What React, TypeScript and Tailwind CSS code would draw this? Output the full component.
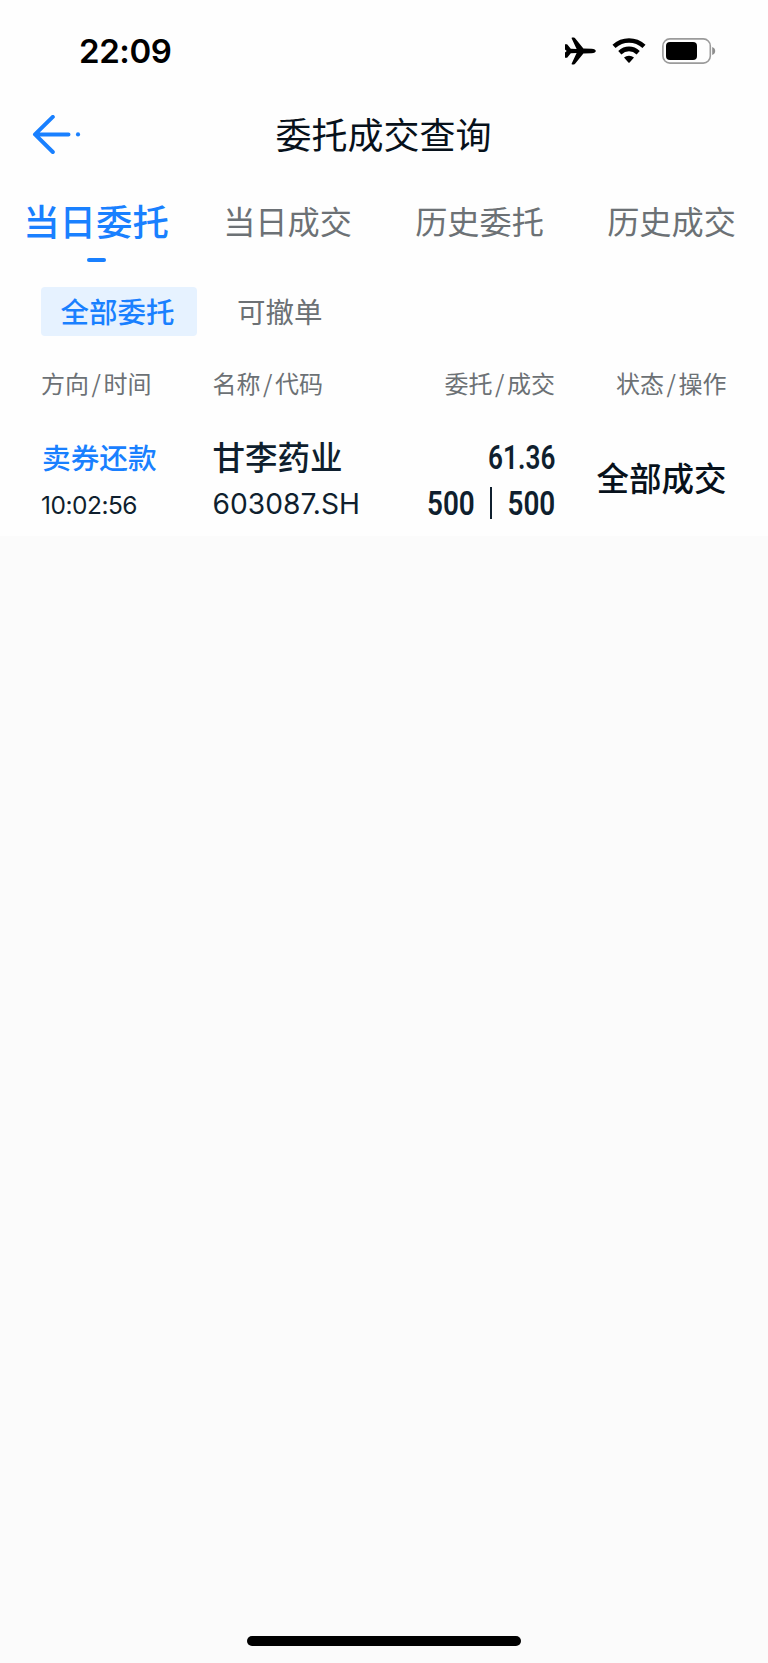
const cjk = "font-['Noto_Sans_CJK_SC',sans-serif]";

const tabs = ['当日委托', '当日成交', '历史委托', '历史成交'];

function StatusBar() {
  return (
    <div className="flex h-[102px] items-center justify-between pl-[79px] pr-[52px]">
      <span className="font-[Inter,sans-serif] text-[33px] font-semibold leading-none tracking-[-0.4px] text-black">22:09</span>
      <div className="flex items-center">
        <svg width="31" height="28" viewBox="0 0 31 28" fill="#000">
          <path d="M0 7.3H2.1L5.8 11.7L11.6 12L6.6 1.2Q6.5 0.5 7.2 0.5H8.8Q9.6 0.5 10.1 1.2L18.4 11.5L26.6 11.7Q30.8 12.2 30.8 14Q30.8 15.8 26.6 16.3L18.4 16.5L10.1 26.8Q9.6 27.5 8.8 27.5H7.2Q6.5 27.5 6.6 26.8L11.6 16L5.8 16.3L2.1 20.7H0V15.4L1.7 14L0 12.6Z" />
        </svg>
        <svg className="ml-[16px]" width="34" height="26" viewBox="0 0 34 26" fill="none" stroke="#000">
          <path d="M2 8.4Q8.6 2.5 17 2.5T32 8.4" strokeWidth="4.6" />
          <path d="M7.8 14.7Q11.9 10.9 17 10.9T26.2 14.7" strokeWidth="4.6" />
          <path d="M12 19.6Q14.1 17.8 17 17.8T22 19.6L17.6 24.4Q17 25 16.4 24.4Z" fill="#000" stroke="none" />
        </svg>
        <svg className="ml-[16px]" width="54" height="26" viewBox="0 0 54 26">
          <rect x="0.9" y="0.9" width="47.4" height="24.2" rx="7" fill="none" stroke="#9b9b9b" strokeWidth="1.6" />
          <rect x="4" y="4" width="31" height="18" rx="4" fill="#000" />
          <path d="M50.2 9Q53.2 10.2 53.2 13T50.2 17Z" fill="#8e8e8e" />
        </svg>
      </div>
    </div>
  );
}

function NavBar() {
  return (
    <div className="grid h-[66px] grid-cols-[100px_1fr_100px] items-center">
      <svg className="ml-[32px]" width="50" height="40" viewBox="0 0 50 40" fill="none" stroke="#1980ff" strokeWidth="4" strokeLinecap="round" strokeLinejoin="round">
        <path d="M20.8 1.9L3 19.4L20.8 37M3.4 19.4H36.5" />
        <circle cx="46" cy="19.4" r="2.1" fill="#1980ff" stroke="none" />
      </svg>
      <h1 className="h-[66px] pr-px text-center text-[36px] leading-[62px] text-[#07111b]">委托成交查询</h1>
    </div>
  );
}

function Tabs() {
  return (
    <div className="grid h-[119px] grid-cols-4">
      {tabs.map((t, i) =>
        i === 0 ? (
          <div key={t} className="flex flex-col items-center text-[36.4px] font-medium leading-[90px] text-[#1980ff]">
            <span className="h-[90px] pt-[7px]">{t}</span>
            <span className="h-[4px] w-[19px] rounded-full bg-[#1980ff]" />
          </div>
        ) : (
          <div key={t} className="pr-px pt-[7px] text-center text-[32.2px] leading-[90px] text-[#6c7175]">{t}</div>
        ),
      )}
    </div>
  );
}

function Filters() {
  return (
    <div className="flex h-[49px] pl-[41px] text-[28.5px] leading-[47px]">
      <div className="w-[156px] rounded-[4px] bg-[#e6f2ff] pl-[19.5px] font-medium text-[#1980ff]">全部委托</div>
      <div className="ml-[40px] text-[#6c7175]">可撤单</div>
    </div>
  );
}

function Heading({ a, b, right }: { a: string; b: string; right?: boolean }) {
  return (
    <div className={right ? 'flex justify-end gap-[2.5px] pr-[0.5px]' : 'flex gap-[2.5px]'}>
      <span>{a}</span>
      <span>/</span>
      <span>{b}</span>
    </div>
  );
}

function Orders() {
  return (
    <div className="px-[41px]">
      <div className="grid h-[96px] grid-cols-4 text-[24px] leading-[94px] text-[#6c7175]">
        <Heading a="方向" b="时间" />
        <Heading a="名称" b="代码" />
        <Heading a="委托" b="成交" right />
        <Heading a="状态" b="操作" right />
      </div>
      <div className="grid h-[104px] grid-cols-4 text-[#0f1f2e]">
        <div>
          <div className="pl-px pt-[3px] text-[28.7px] font-medium leading-[44px] text-[#1980ff]">卖券还款</div>
          <div className="pt-[4px] font-[Inter,sans-serif] text-[24.5px] leading-[44px] tracking-[-0.5px]">10:02:56</div>
        </div>
        <div>
          <div className="pt-[2px] text-[32.5px] font-medium leading-[44px]">甘李药业</div>
          <div className="pt-[4px] font-[Inter,sans-serif] text-[28.2px] leading-[44px]">603087.SH</div>
        </div>
        <div className="flex flex-col items-end font-[Roboto,sans-serif] text-[34px] font-semibold">
          <div className="origin-right scale-x-[0.77] pt-[3px] leading-[44px]">61.36</div>
          <div className="flex items-center justify-end pt-[2px] leading-[44px]">
            <span className="w-[49px]"><span className="inline-block origin-left scale-x-[0.82]">500</span></span>
            <span className="ml-[14px] h-[32px] w-[2px] bg-[#0f1f2e]" />
            <span className="ml-[14px] flex w-[50px] justify-end"><span className="inline-block origin-right scale-x-[0.82]">500</span></span>
          </div>
        </div>
        <div className="flex justify-end whitespace-nowrap pr-[0.5px] pt-[3px] text-[32.5px] font-medium leading-[84px] text-[#07111b]">全部成交</div>
      </div>
    </div>
  );
}

export default function App() {
  return (
    <div className={`flex h-[1663px] w-[768px] flex-col bg-[#fbfbfb] ${cjk}`}>
      <div className="h-[536px] bg-[#fefefe]">
        <StatusBar />
        <NavBar />
        <Tabs />
        <Filters />
        <Orders />
      </div>
      <div className="mb-[17px] mt-auto h-[10px] w-[274px] self-center rounded-full bg-black" />
    </div>
  );
}
